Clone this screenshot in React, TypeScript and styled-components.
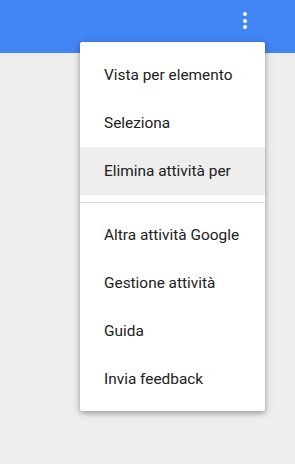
import React from "react";
import styled, { createGlobalStyle } from "styled-components";

const Global = createGlobalStyle`
  html, body { margin: 0; padding: 0; background: #eeeeee; }
  body { font-family: Roboto, "Noto Sans", sans-serif; }
`;

const Page = styled.div`
  position: relative;
  width: 295px;
  height: 464px;
  background: #eeeeee;
  overflow: hidden;
`;

const AppBar = styled.header`
  height: 53px;
  background: #4285f4;
  display: flex;
  justify-content: flex-end;
  align-items: flex-start;
  padding-right: 48px;
`;

const MoreButton = styled.div`
  display: flex;
  flex-direction: column;
  gap: 2.6px;
  padding-top: 12px;
`;

const Dot = styled.span`
  width: 4px;
  height: 4px;
  border-radius: 50%;
  background: #ffffff;
`;

const Menu = styled.ul`
  position: absolute;
  left: 80px;
  top: 42px;
  width: 185px;
  margin: 0;
  padding: 9px 0 8px;
  list-style: none;
  background: #ffffff;
  border-radius: 2px;
  box-shadow: 0 2px 5px rgba(0, 0, 0, 0.26), 0 2px 10px rgba(0, 0, 0, 0.16);
`;

const Item = styled.li<{ $active?: boolean }>`
  height: 48px;
  display: flex;
  align-items: center;
  padding-left: 24px;
  font-size: 15.4px;
  color: #212121;
  background: ${(p) => (p.$active ? "#eeeeee" : "transparent")};
  white-space: nowrap;
`;

const Divider = styled.li`
  height: 1px;
  margin: 7px 0 8px;
  background: #e0e0e0;
`;

export default function App() {
  return (
    <Page>
      <Global />
      <AppBar>
        <MoreButton>
          <Dot />
          <Dot />
          <Dot />
        </MoreButton>
      </AppBar>
      <Menu>
        <Item>Vista per elemento</Item>
        <Item>Seleziona</Item>
        <Item $active>Elimina attività per</Item>
        <Divider />
        <Item>Altra attività Google</Item>
        <Item>Gestione attività</Item>
        <Item>Guida</Item>
        <Item>Invia feedback</Item>
      </Menu>
    </Page>
  );
}
